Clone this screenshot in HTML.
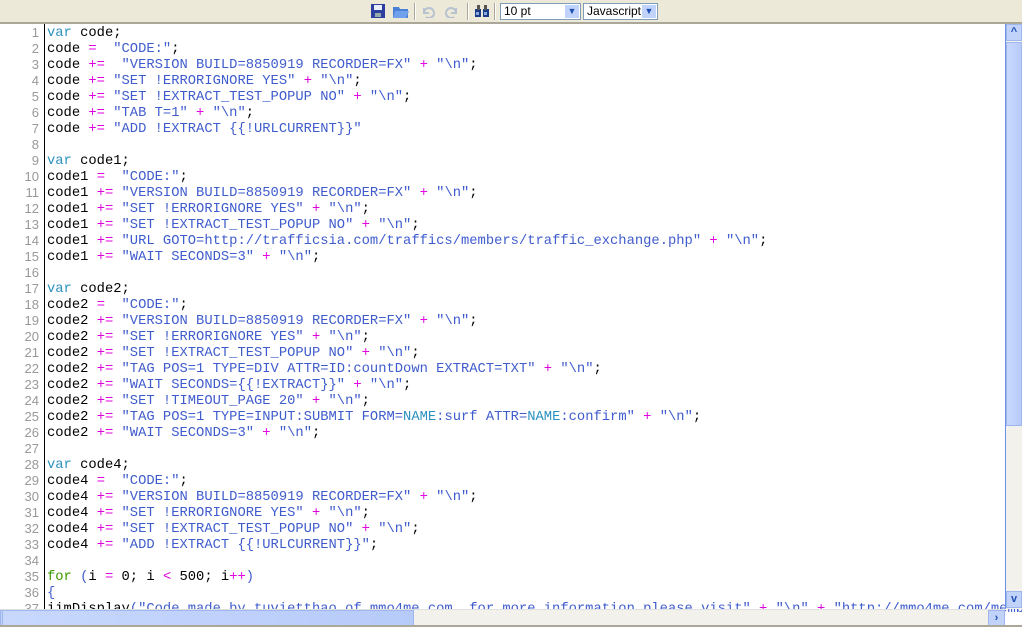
<!DOCTYPE html>
<html><head><style>
body{margin:0;width:1022px;height:627px;overflow:hidden;background:#fff;position:relative;font-family:"Liberation Sans",sans-serif}
#tb{position:absolute;left:0;top:0;width:1022px;height:22px;background:#ece9d8;border-bottom:2px solid #aca899}
#gut{position:absolute;left:0;top:24px;width:44px;height:585px;border-right:1px solid #000;overflow:hidden}
.ln{position:absolute;right:5px;top:1px;font:13px/16px "Liberation Sans",sans-serif;color:#999;text-align:right}
#code{position:absolute;left:47px;top:26px;font:13.8px/16px "Liberation Mono",monospace;color:#000;white-space:pre}
.k{color:#2b91c0}.s{color:#3f5ccd}.o{color:#e000e0}.g{color:#3a9a00}
#vs{position:absolute;left:1005px;top:24px;width:17px;height:585px;background:#f3f1ec;border-left:1px solid #6d8fe8}
#hs{position:absolute;left:0;top:609px;width:1005px;height:16px;background:#f3f1ec;border-top:1px solid #e0e0e0}
.btn{position:absolute;background:#c1d3fb;border:1px solid #9fb6ef;box-sizing:border-box;color:#1d4fb5;font:bold 11px/14px "Liberation Sans";text-align:center}
.thumb{position:absolute;background:linear-gradient(90deg,#c8d8fd,#b7cbfa);border:1px solid #9fb6ef;box-sizing:border-box}
#bot{position:absolute;left:0;top:625px;width:1022px;height:2px;background:#aca899}
.sel{position:absolute;top:3px;height:17px;background:#fff;border:1px solid #7f9db9;box-sizing:border-box;font:12px/15px "Liberation Sans";padding-left:3px}
.dd{position:absolute;right:1px;top:1px;width:14px;height:13px;background:#c1d3fb;color:#1d4fb5;font:9px/13px sans-serif;text-align:center}
.sep{position:absolute;top:3px;width:1px;height:17px;background:#aca899;border-right:1px solid #fff}
</style></head><body>
<div id="tb">
<svg style="position:absolute;left:370px;top:3px" width="16" height="16"><rect x="1" y="1" width="14" height="14" fill="#2c3fa0"/><rect x="4" y="2" width="8" height="5" fill="#e8eefc"/><rect x="5" y="10" width="6" height="4" fill="#9aa"/></svg>
<svg style="position:absolute;left:392px;top:3px" width="18" height="16"><path d="M1 4h6l1 2h8v9H1z" fill="#4a7fd8"/><path d="M3 8h14l-3 7H1z" fill="#6fa0ec"/></svg>
<div class="sep" style="left:414px"></div>
<svg style="position:absolute;left:421px;top:4px" width="14" height="14"><path d="M3 4v5h5M3 9a5 5 0 1 1 2 4" stroke="#b8c2d0" stroke-width="2" fill="none"/></svg>
<svg style="position:absolute;left:445px;top:4px" width="14" height="14"><path d="M11 4v5h-5M11 9a5 5 0 1 0-2 4" stroke="#b8c2d0" stroke-width="2" fill="none"/></svg>
<div class="sep" style="left:467px"></div>
<svg style="position:absolute;left:474px;top:4px" width="16" height="14"><rect x="1" y="5" width="6" height="8" fill="#1a3a8a"/><rect x="9" y="5" width="6" height="8" fill="#1a3a8a"/><rect x="3" y="1" width="3" height="5" fill="#555"/><rect x="10" y="1" width="3" height="5" fill="#555"/><rect x="2" y="8" width="3" height="3" fill="#8ad"/><rect x="10" y="8" width="3" height="3" fill="#8ad"/></svg>
<div class="sep" style="left:494px"></div>
<div class="sel" style="left:500px;width:81px">10 pt<div class="dd">▼</div></div>
<div class="sel" style="left:583px;width:75px">Javascript<div class="dd">▼</div></div>
</div>
<div id="gut">
<div class="ln">1<br>2<br>3<br>4<br>5<br>6<br>7<br>8<br>9<br>10<br>11<br>12<br>13<br>14<br>15<br>16<br>17<br>18<br>19<br>20<br>21<br>22<br>23<br>24<br>25<br>26<br>27<br>28<br>29<br>30<br>31<br>32<br>33<br>34<br>35<br>36<br>37</div>
</div>
<div id="code"><span class="k">var</span> code;
code <span class="o">=</span>  <span class="s">"CODE:"</span>;
code <span class="o">+=</span>  <span class="s">"VERSION BUILD=8850919 RECORDER=FX"</span> <span class="o">+</span> <span class="s">"\n"</span>;
code <span class="o">+=</span> <span class="s">"SET !ERRORIGNORE YES"</span> <span class="o">+</span> <span class="s">"\n"</span>;
code <span class="o">+=</span> <span class="s">"SET !EXTRACT_TEST_POPUP NO"</span> <span class="o">+</span> <span class="s">"\n"</span>;
code <span class="o">+=</span> <span class="s">"TAB T=1"</span> <span class="o">+</span> <span class="s">"\n"</span>;
code <span class="o">+=</span> <span class="s">"ADD !EXTRACT {{!URLCURRENT}}"</span>

<span class="k">var</span> code1;
code1 <span class="o">=</span>  <span class="s">"CODE:"</span>;
code1 <span class="o">+=</span> <span class="s">"VERSION BUILD=8850919 RECORDER=FX"</span> <span class="o">+</span> <span class="s">"\n"</span>;
code1 <span class="o">+=</span> <span class="s">"SET !ERRORIGNORE YES"</span> <span class="o">+</span> <span class="s">"\n"</span>;
code1 <span class="o">+=</span> <span class="s">"SET !EXTRACT_TEST_POPUP NO"</span> <span class="o">+</span> <span class="s">"\n"</span>;
code1 <span class="o">+=</span> <span class="s">"URL GOTO=http://trafficsia.com/traffics/members/traffic_exchange.php"</span> <span class="o">+</span> <span class="s">"\n"</span>;
code1 <span class="o">+=</span> <span class="s">"WAIT SECONDS=3"</span> <span class="o">+</span> <span class="s">"\n"</span>;

<span class="k">var</span> code2;
code2 <span class="o">=</span>  <span class="s">"CODE:"</span>;
code2 <span class="o">+=</span> <span class="s">"VERSION BUILD=8850919 RECORDER=FX"</span> <span class="o">+</span> <span class="s">"\n"</span>;
code2 <span class="o">+=</span> <span class="s">"SET !ERRORIGNORE YES"</span> <span class="o">+</span> <span class="s">"\n"</span>;
code2 <span class="o">+=</span> <span class="s">"SET !EXTRACT_TEST_POPUP NO"</span> <span class="o">+</span> <span class="s">"\n"</span>;
code2 <span class="o">+=</span> <span class="s">"TAG POS=1 TYPE=DIV ATTR=ID:countDown EXTRACT=TXT"</span> <span class="o">+</span> <span class="s">"\n"</span>;
code2 <span class="o">+=</span> <span class="s">"WAIT SECONDS={{!EXTRACT}}"</span> <span class="o">+</span> <span class="s">"\n"</span>;
code2 <span class="o">+=</span> <span class="s">"SET !TIMEOUT_PAGE 20"</span> <span class="o">+</span> <span class="s">"\n"</span>;
code2 <span class="o">+=</span> <span class="s">"TAG POS=1 TYPE=INPUT:SUBMIT FORM=<span class="k">NAME</span>:surf ATTR=<span class="k">NAME</span>:confirm"</span> <span class="o">+</span> <span class="s">"\n"</span>;
code2 <span class="o">+=</span> <span class="s">"WAIT SECONDS=3"</span> <span class="o">+</span> <span class="s">"\n"</span>;

<span class="k">var</span> code4;
code4 <span class="o">=</span>  <span class="s">"CODE:"</span>;
code4 <span class="o">+=</span> <span class="s">"VERSION BUILD=8850919 RECORDER=FX"</span> <span class="o">+</span> <span class="s">"\n"</span>;
code4 <span class="o">+=</span> <span class="s">"SET !ERRORIGNORE YES"</span> <span class="o">+</span> <span class="s">"\n"</span>;
code4 <span class="o">+=</span> <span class="s">"SET !EXTRACT_TEST_POPUP NO"</span> <span class="o">+</span> <span class="s">"\n"</span>;
code4 <span class="o">+=</span> <span class="s">"ADD !EXTRACT {{!URLCURRENT}}"</span>;

<span class="g">for</span> <span class="s">(</span>i <span class="o">=</span> 0; i <span class="o">&lt;</span> 500; i<span class="o">++</span><span class="s">)</span>
<span class="s">{</span>
iimDisplay<span class="s">("Code made by tuvietthao of mmo4me.com, for more information please visit"</span> <span class="o">+</span> <span class="s">"\n"</span> <span class="o">+</span> <span class="s">"http://mmo4me.com/member</span></div>
<div id="vs">
<div class="btn" style="left:0;top:0;width:16px;height:17px">^</div>
<div class="thumb" style="left:0;top:18px;width:16px;height:384px"></div>
<div class="btn" style="left:0;top:567px;width:16px;height:17px">v</div>
</div>
<div id="hs">
<div class="btn" style="left:0;top:0;width:17px;height:16px">‹</div>
<div class="thumb" style="left:2px;top:0;width:412px;height:16px"></div>
<div class="btn" style="left:988px;top:0;width:17px;height:16px">›</div>
</div>
<div id="bot"></div>
</body></html>
